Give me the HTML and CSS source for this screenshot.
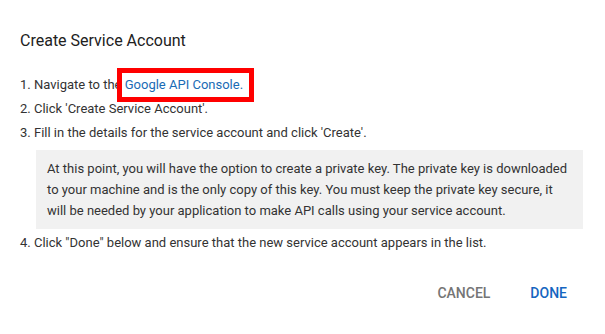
FILE: index.html
```html
<!DOCTYPE html>
<html lang="en">
<head>
    <meta charset="UTF-8">
    <meta name="viewport" content="width=device-width, initial-scale=1.0">
    <title>Create Service Account</title>
    <link rel="stylesheet" href="styles.css">
</head>
<body>

    <div class="dialog">
        <h2 class="dialog-title">Create Service Account</h2>

        <ol class="steps">
            <li>Navigate to the <a class="console-link" href="#">Google API Console.</a></li>
            <li>Click 'Create Service Account'.</li>
            <li>Fill in the details for the service account and click 'Create'.</li>
        </ol>

        <div class="note">
            At this point, you will have the option to create a private key. The private key is downloaded
            to your machine and is the only copy of this key. You must keep the private key secure, it
            will be needed by your application to make API calls using your service account.
        </div>

        <ol class="steps" start="4">
            <li>Click "Done" below and ensure that the new service account appears in the list.</li>
        </ol>

        <div class="actions">
            <button class="btn btn-cancel">Cancel</button>
            <button class="btn btn-done">Done</button>
        </div>
    </div>

</body>
</html>
```

FILE: styles.css
```css
/* base */
body {
    margin: 0;
    background-color: #ffffff;
    font-family: Roboto, "Liberation Sans", Arial, sans-serif;
    color: #212121;
}

/* dialog */
.dialog {
    padding: 29px 22px 0 20px;
}

.dialog-title {
    margin: 0 0 20px;
    font-size: 16px;
    font-weight: 400;
    line-height: 24px;
    color: #212121;
}

/* step list */
.steps {
    margin: 0;
    padding: 0;
    list-style-position: inside;
    font-size: 13px;
    line-height: 24px;
    color: #333333;
}

.console-link {
    position: relative;
    color: #1a6bb5;
    text-decoration: none;
}

/* red highlight drawn over the link */
.console-link::after {
    content: "";
    position: absolute;
    left: -8px;
    right: -11px;
    top: -9px;
    bottom: -10px;
    border: 5px solid #ff0000;
}

/* grey note box */
.note {
    margin: 5px 0 2px 16px;
    padding: 8px 10px 8px 11px;
    background-color: #f1f1f1;
    font-size: 13px;
    line-height: 21px;
    color: #333333;
}

/* buttons */
.actions {
    display: flex;
    justify-content: flex-end;
    gap: 24px;
    margin-top: 20px;
    padding-right: 8px;
}

.btn {
    height: 36px;
    padding: 0 8px;
    border: none;
    background: none;
    font-family: Roboto, "Liberation Sans", Arial, sans-serif;
    font-size: 14px;
    font-weight: 500;
    text-transform: uppercase;
    cursor: pointer;
}

.btn-cancel {
    color: #757575;
}

.btn-done {
    color: #1565c0;
}
```
